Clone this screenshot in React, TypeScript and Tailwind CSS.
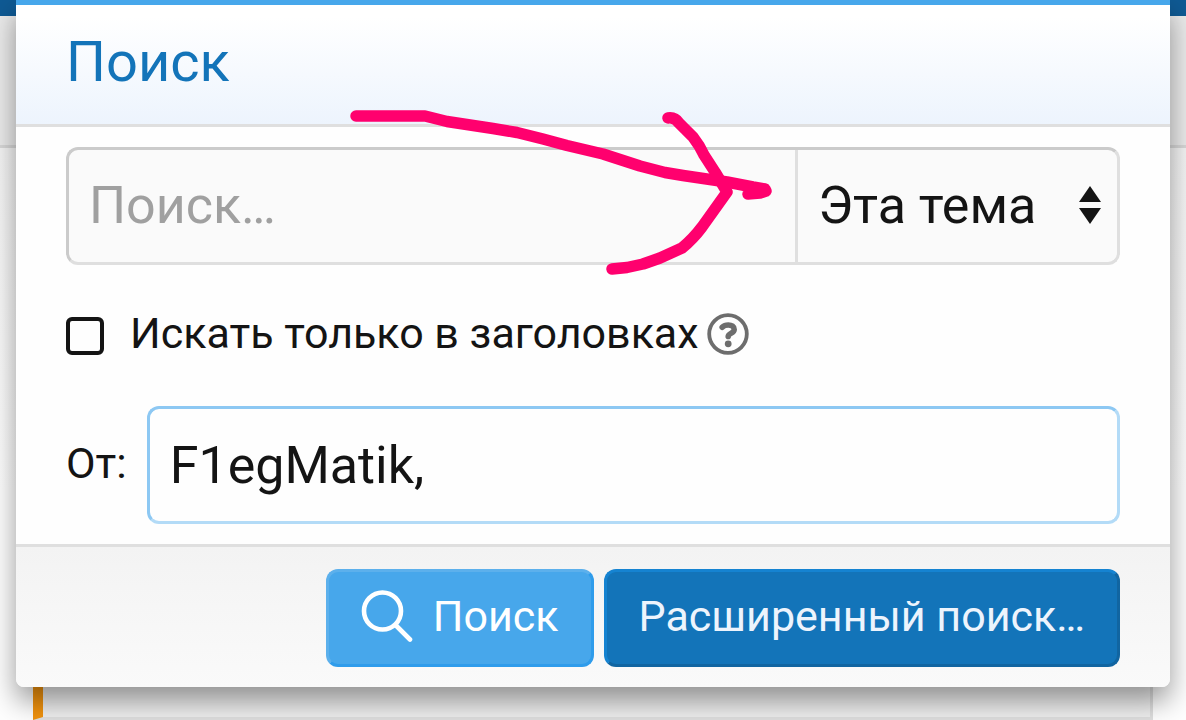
import { type FormEvent, useState } from "react";

function SearchIcon() {
  return (
    <svg viewBox="0 0 52 52" className="size-13" fill="none" stroke="currentColor" strokeWidth="4.6" aria-hidden="true">
      <circle cx="21.5" cy="21" r="18.5" />
      <path d="M35 35.5 49 49.5" strokeLinecap="round" />
    </svg>
  );
}

function HelpIcon() {
  return (
    <svg viewBox="0 0 42 42" className="size-[42px]" fill="none" stroke="currentColor" aria-hidden="true">
      <circle cx="21" cy="21" r="18.8" strokeWidth="3.8" />
      <path d="M15.2 14.2C17 12.4 19 12 21.4 12c3.2 0 5.8 1.6 5.8 4.4 0 4-6 3.8-6 7" strokeWidth="5.6" strokeLinecap="round" />
      <circle cx="21.2" cy="30.8" r="3.4" fill="currentColor" stroke="none" />
    </svg>
  );
}

function HandDrawnArrow() {
  return (
    <svg
      viewBox="0 0 430 170"
      className="pointer-events-none absolute top-[108px] left-[345px] w-[430px]"
      fill="none"
      stroke="#ff006e"
      strokeWidth="11.5"
      strokeLinecap="round"
      strokeLinejoin="round"
      aria-hidden="true"
    >
      <path d="M11 8H80Q92 11 102 13.5L148 20.5 172 24.5 198 31 222 37.5 258 46 295 58 320 64.5 338 67.5 382 74 408 79 420 81 421 83 415 85 403 86 408 82" />
      <path d="M323 10Q330 9 334 15L348 29Q355 38 359 47L370 64 382 84 357 119Q348 131 337 140L315 150 298 156 282 159.5 267 161" />
    </svg>
  );
}

export default function App() {
  const [keywords, setKeywords] = useState("");
  const [scope, setScope] = useState("thread");
  const [titlesOnly, setTitlesOnly] = useState(false);
  const [author, setAuthor] = useState("F1egMatik,");

  function onSubmit(event: FormEvent<HTMLFormElement>) {
    event.preventDefault();
  }

  return (
    <div className="relative flex h-screen flex-col overflow-hidden bg-[#fefefe] font-['Roboto',sans-serif] text-[#141414]">
      {/* forum page under the menu */}
      <div className="h-4 shrink-0 bg-[#0f5a94]" />
      <div className="h-[132px] shrink-0 border-b-3 border-[#d8d8d8] bg-[#ebebeb]" />
      <div className="flex flex-1 flex-col bg-linear-to-b from-[#f5f5f5] to-[#fefefe] to-60% px-[33px]">
        <div className="flex-1 border-r-3 border-b-3 border-l-10 border-r-[#dfdfdf] border-b-[#dfdfdf] border-l-[#f2930d] bg-[#f0f0f0]" />
      </div>

      <form
        onSubmit={onSubmit}
        className="absolute inset-x-4 top-0 rounded-b-lg border-t-5 border-[#47a7eb] bg-[#fefefe] shadow-[0_14px_28px_rgba(0,0,0,0.4)]"
      >
        <h3 className="border-b-3 border-[#dfdfdf] bg-linear-to-b from-white from-10% to-[#edf4fd] px-[50px] pt-[22px] pb-[26px] text-[56px] leading-[71px] text-[#1374b9]">
          Поиск
        </h3>

        <div className="px-[50px] py-5">
          <div className="flex h-[118px] rounded-xl border-3 border-[#dfdfdf] border-t-[#cbcbcb] border-l-[#cbcbcb] bg-[#fafafa]">
            <input
              type="search"
              aria-label="Поиск"
              placeholder="Поиск…"
              value={keywords}
              onChange={(event) => setKeywords(event.target.value)}
              className="min-w-0 flex-1 px-5 text-[52px] outline-none placeholder:text-[#a0a0a0]"
            />
            <div className="relative w-[322px] border-l-3 border-[#dfdfdf]">
              <select
                aria-label="Где искать"
                value={scope}
                onChange={(event) => setScope(event.target.value)}
                className="size-full appearance-none pl-5 text-[52px] outline-none"
              >
                <option value="everywhere">Везде</option>
                <option value="forum">Этот раздел</option>
                <option value="thread">Эта тема</option>
              </select>
              <svg viewBox="0 0 22 38" className="pointer-events-none absolute top-9 right-4 w-[22px]" fill="currentColor" aria-hidden="true">
                <path d="M11 0 22 16H0ZM0 22H22L11 38Z" />
              </svg>
            </div>
          </div>

          <div className="flex h-[141px] items-center pb-1">
            <label className="flex items-center gap-[26px] text-[43px]">
              <input
                type="checkbox"
                checked={titlesOnly}
                onChange={(event) => setTitlesOnly(event.target.checked)}
                className="mt-1 size-[38px] appearance-none rounded-md border-4 border-[#141414] checked:bg-[#1374b9]"
              />
              Искать только в заголовках
            </label>
            <button type="button" aria-label="Справка" className="ml-2 text-[#6d6d6d]">
              <HelpIcon />
            </button>
          </div>

          <div className="flex items-center gap-5">
            <label htmlFor="author" className="pb-1 text-[43px]">
              От:
            </label>
            <input
              id="author"
              type="text"
              value={author}
              onChange={(event) => setAuthor(event.target.value)}
              className="h-[118px] min-w-0 flex-1 rounded-xl border-3 border-[#b3dbf7] border-t-[#8dc8f3] border-l-[#8dc8f3] px-5 text-[52px] outline-none"
            />
          </div>
        </div>

        <div className="flex justify-end gap-2.5 rounded-b-lg border-t-3 border-[#dfdfdf] bg-linear-to-b from-[#f3f3f3] to-[#fafafa] px-[50px] pt-[22px] pb-5 text-[43px]">
          <button
            type="submit"
            className="flex h-[98px] items-center gap-5 rounded-xl border-3 border-[#2f9ceb] border-t-[#5cb0ec] border-l-[#5cb0ec] bg-[#47a7eb] px-8 pb-1 text-white"
          >
            <SearchIcon />
            Поиск
          </button>
          <a
            href="#advanced"
            className="flex h-[98px] items-center rounded-xl border-3 border-[#1165a1] border-t-[#1583d1] border-l-[#1583d1] bg-[#1374b9] px-8 pb-1 text-[#edf4fd]"
          >
            Расширенный поиск…
          </a>
        </div>
      </form>

      <HandDrawnArrow />
    </div>
  );
}
